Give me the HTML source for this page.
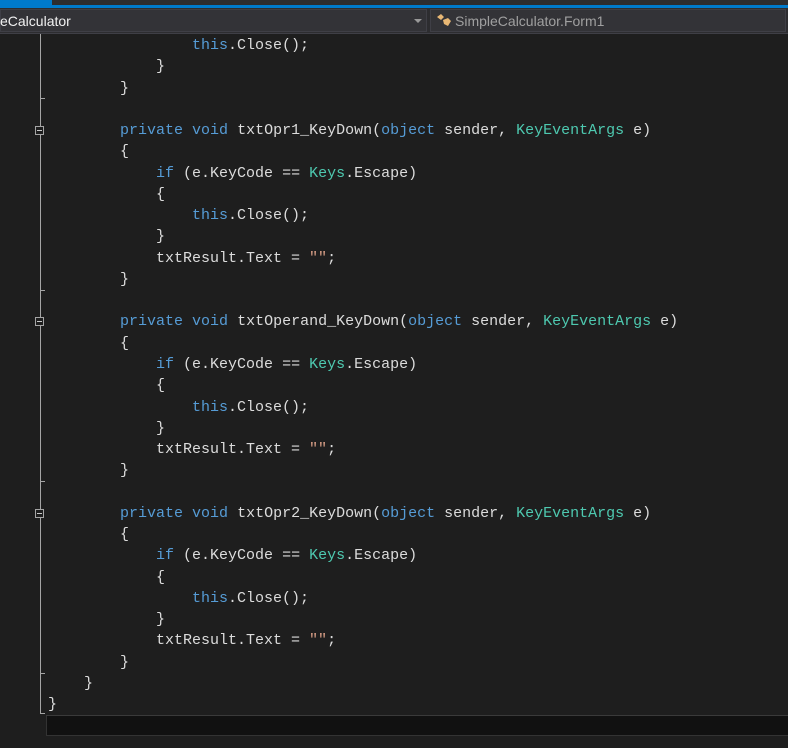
<!DOCTYPE html>
<html><head><style>
body{margin:0;width:788px;height:748px;background:#1e1e1e;overflow:hidden;position:relative;font-family:"Liberation Sans",sans-serif}
.a{position:absolute}
.code{position:absolute;left:48px;top:35px;font-family:"Liberation Mono",monospace;font-size:15px;line-height:21.27px;color:#dcdcdc;white-space:pre;margin:0}
.k{color:#569cd6}.t{color:#4ec9b0}.s{color:#d69d85}
.box{position:absolute;left:35px;width:9px;height:9px;border:1px solid #a5a5a5;box-sizing:border-box;background:#1e1e1e}
.box:after{content:"";position:absolute;left:1px;top:3px;width:5px;height:1px;background:#c8c8c8}
.tick{position:absolute;left:40px;width:5px;height:1px;background:#a5a5a5}
</style></head><body>
<div class="a" style="left:0;top:0;width:788px;height:8px;background:#2d2d30"></div>
<div class="a" style="left:0;top:0;width:52px;height:6px;background:#007acc"></div>
<div class="a" style="left:0;top:5px;width:788px;height:3px;background:#007acc"></div>
<div class="a" style="left:0;top:8px;width:788px;height:26px;background:#2d2d30"></div>
<div class="a" style="left:0;top:9px;width:427px;height:23px;background:#333337;border:1px solid #3f3f46;box-sizing:border-box"></div>
<div class="a" style="left:0;top:13px;font-size:14px;color:#f1f1f1">eCalculator</div>
<div class="a" style="left:414px;top:19px;width:0;height:0;border-left:4px solid transparent;border-right:4px solid transparent;border-top:4px solid #999"></div>
<div class="a" style="left:430px;top:9px;width:356px;height:23px;background:#333337;border:1px solid #3f3f46;box-sizing:border-box"></div>
<div class="a" style="left:436px;top:13px;width:16px;height:14px"><svg width="16" height="14"><path d="M1 4 L5 1 L8 4 L5 7Z M7 7 L12 5 L15 8 L12 13 L8 11Z" fill="#e8b774"/></svg></div>
<div class="a" style="left:455px;top:13px;font-size:14px;color:#a0a0a0">SimpleCalculator.Form1</div>
<div class="a" style="left:0;top:33px;width:788px;height:1px;background:#3f3f46"></div>
<div class="a" style="left:40px;top:34px;width:1px;height:680px;background:#a5a5a5"></div>
<div class="tick" style="top:98px"></div>
<div class="tick" style="top:290px"></div>
<div class="tick" style="top:481px"></div>
<div class="tick" style="top:673px"></div>
<div class="tick" style="top:713px"></div>
<div class="box" style="top:126px"></div>
<div class="box" style="top:317px"></div>
<div class="box" style="top:509px"></div>
<pre class="code">                <span class="k">this</span>.Close();
            }
        }

        <span class="k">private</span> <span class="k">void</span> txtOpr1_KeyDown(<span class="k">object</span> sender, <span class="t">KeyEventArgs</span> e)
        {
            <span class="k">if</span> (e.KeyCode == <span class="t">Keys</span>.Escape)
            {
                <span class="k">this</span>.Close();
            }
            txtResult.Text = <span class="s">""</span>;
        }

        <span class="k">private</span> <span class="k">void</span> txtOperand_KeyDown(<span class="k">object</span> sender, <span class="t">KeyEventArgs</span> e)
        {
            <span class="k">if</span> (e.KeyCode == <span class="t">Keys</span>.Escape)
            {
                <span class="k">this</span>.Close();
            }
            txtResult.Text = <span class="s">""</span>;
        }

        <span class="k">private</span> <span class="k">void</span> txtOpr2_KeyDown(<span class="k">object</span> sender, <span class="t">KeyEventArgs</span> e)
        {
            <span class="k">if</span> (e.KeyCode == <span class="t">Keys</span>.Escape)
            {
                <span class="k">this</span>.Close();
            }
            txtResult.Text = <span class="s">""</span>;
        }
    }
}</pre>
<div class="a" style="left:46px;top:715px;width:742px;height:1px;background:#3a3a3a"></div>
<div class="a" style="left:46px;top:716px;width:742px;height:19px;background:#111;border-left:1px solid #333;border-bottom:1px solid #333"></div>
</body></html>
